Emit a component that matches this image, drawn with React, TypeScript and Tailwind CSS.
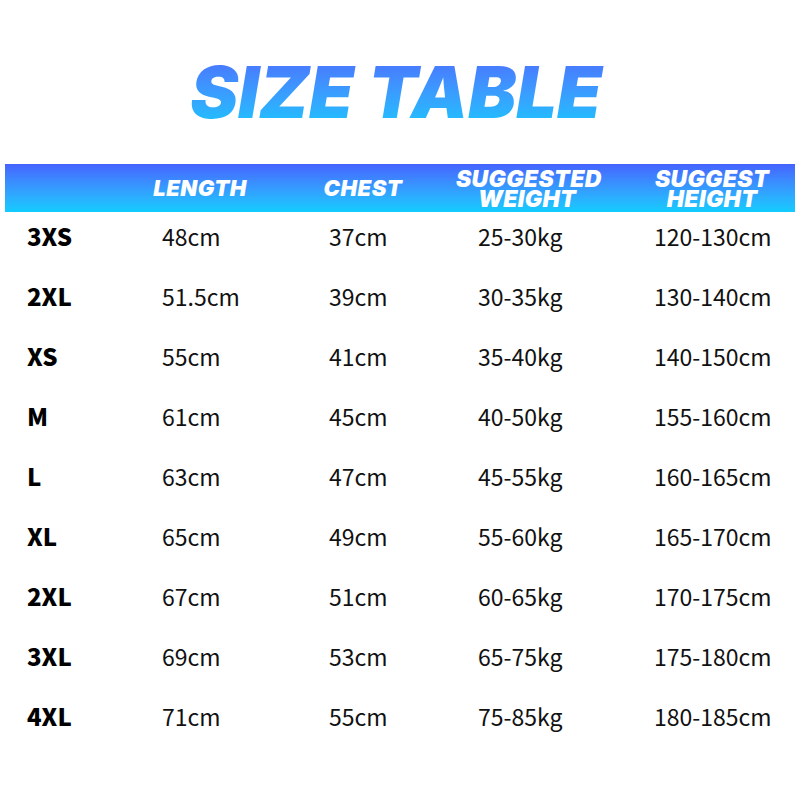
const rows = [
  ['3XS', '48cm', '37cm', '25-30kg', '120-130cm'],
  ['2XL', '51.5cm', '39cm', '30-35kg', '130-140cm'],
  ['XS', '55cm', '41cm', '35-40kg', '140-150cm'],
  ['M', '61cm', '45cm', '40-50kg', '155-160cm'],
  ['L', '63cm', '47cm', '45-55kg', '160-165cm'],
  ['XL', '65cm', '49cm', '55-60kg', '165-170cm'],
  ['2XL', '67cm', '51cm', '60-65kg', '170-175cm'],
  ['3XL', '69cm', '53cm', '65-75kg', '175-180cm'],
  ['4XL', '71cm', '55cm', '75-85kg', '180-185cm'],
]

export default function App() {
  return (
    <div className="w-[800px] h-[800px] bg-white overflow-hidden font-['Noto_Sans_CJK_SC','Noto_Sans',sans-serif]">
      {/* Title */}
      <div className="h-[164px] flex items-center justify-center pt-[20px]">
        <h1 className="font-['Inter',sans-serif] font-black italic text-[72px] leading-none tracking-[0px] bg-linear-to-b from-[#4a70ff] to-[#14c4ff] bg-clip-text text-transparent pr-2">
          SIZE TABLE
        </h1>
      </div>

      {/* Header band */}
      <div className="mx-[5px] h-[48px] bg-linear-to-b from-[#4562ff] to-[#10ccff] grid grid-cols-[125px_140px_186px_142px_1fr] items-center text-white font-['Inter',sans-serif] font-black italic">
        <div />
        <div className="text-center text-[22px] tracking-[0.5px]">LENGTH</div>
        <div className="text-center text-[22px] tracking-[0.5px]">CHEST</div>
        <div className="text-center text-[23px] leading-[20px] tracking-[0.3px] pt-[2px]">
          SUGGESTED
          <br />
          WEIGHT
        </div>
        <div className="text-center text-[23px] leading-[20px] tracking-[0.3px] pl-[31px] pt-[2px]">
          SUGGEST
          <br />
          HEIGHT
        </div>
      </div>

      {/* Rows */}
      <div className="-mt-[6px]">
        {rows.map((r, i) => (
          <div
            key={i}
            className="h-[60px] grid grid-cols-[162px_167px_149px_176px_1fr] items-center text-[23px] text-[#111]"
          >
            <div className="pl-[27px] text-[24px] font-black text-black">{r[0]}</div>
            <div>{r[1]}</div>
            <div>{r[2]}</div>
            <div>{r[3]}</div>
            <div>{r[4]}</div>
          </div>
        ))}
      </div>
    </div>
  )
}
